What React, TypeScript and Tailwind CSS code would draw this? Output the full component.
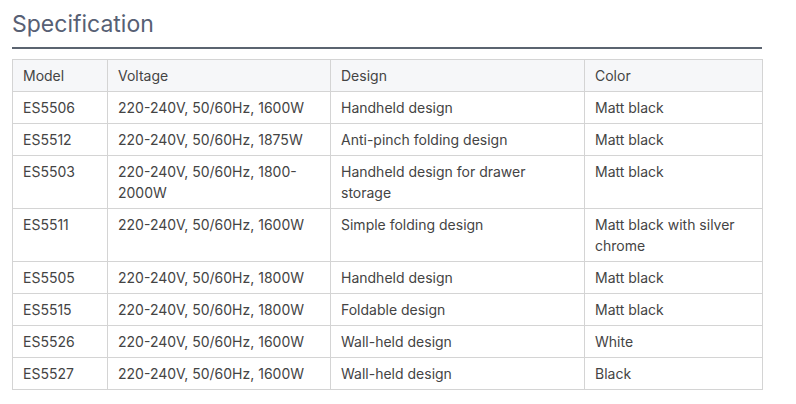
const rows = [
  { model: 'ES5506', voltage: '220-240V, 50/60Hz, 1600W', design: 'Handheld design', color: 'Matt black' },
  { model: 'ES5512', voltage: '220-240V, 50/60Hz, 1875W', design: 'Anti-pinch folding design', color: 'Matt black' },
  { model: 'ES5503', voltage: '220-240V, 50/60Hz, 1800-2000W', design: 'Handheld design for drawer storage', color: 'Matt black' },
  { model: 'ES5511', voltage: '220-240V, 50/60Hz, 1600W', design: 'Simple folding design', color: 'Matt black with silver chrome' },
  { model: 'ES5505', voltage: '220-240V, 50/60Hz, 1800W', design: 'Handheld design', color: 'Matt black' },
  { model: 'ES5515', voltage: '220-240V, 50/60Hz, 1800W', design: 'Foldable design', color: 'Matt black' },
  { model: 'ES5526', voltage: '220-240V, 50/60Hz, 1600W', design: 'Wall-held design', color: 'White' },
  { model: 'ES5527', voltage: '220-240V, 50/60Hz, 1600W', design: 'Wall-held design', color: 'Black' },
];

const cell = 'border border-[#d4d4d4] px-[10px] pt-[5px] pb-[5px] align-top text-left font-normal';

export default function App() {
  return (
    <div className="w-[796px] h-[404px] bg-white pl-[12px] pr-[34px] font-['Inter',sans-serif] text-[14px] leading-[21px] text-[#444444]">
      <h2 className="pt-[8px] text-[23px] leading-[32px] text-[#576074] font-normal">Specification</h2>
      <div className="mt-[7px] h-[2px] bg-[#5b6470]" />
      <table className="mt-[10px] w-[750px] table-fixed border-collapse">
        <colgroup>
          <col className="w-[95px]" />
          <col className="w-[223px]" />
          <col className="w-[254px]" />
          <col className="w-[178px]" />
        </colgroup>
        <thead>
          <tr className="bg-[#f6f7f9]">
            <th className={cell}>Model</th>
            <th className={cell}>Voltage</th>
            <th className={cell}>Design</th>
            <th className={cell}>Color</th>
          </tr>
        </thead>
        <tbody>
          {rows.map((r) => (
            <tr key={r.model}>
              <td className={cell}>{r.model}</td>
              <td className={cell}>{r.voltage}</td>
              <td className={cell}>{r.design}</td>
              <td className={cell}>{r.color}</td>
            </tr>
          ))}
        </tbody>
      </table>
    </div>
  );
}
